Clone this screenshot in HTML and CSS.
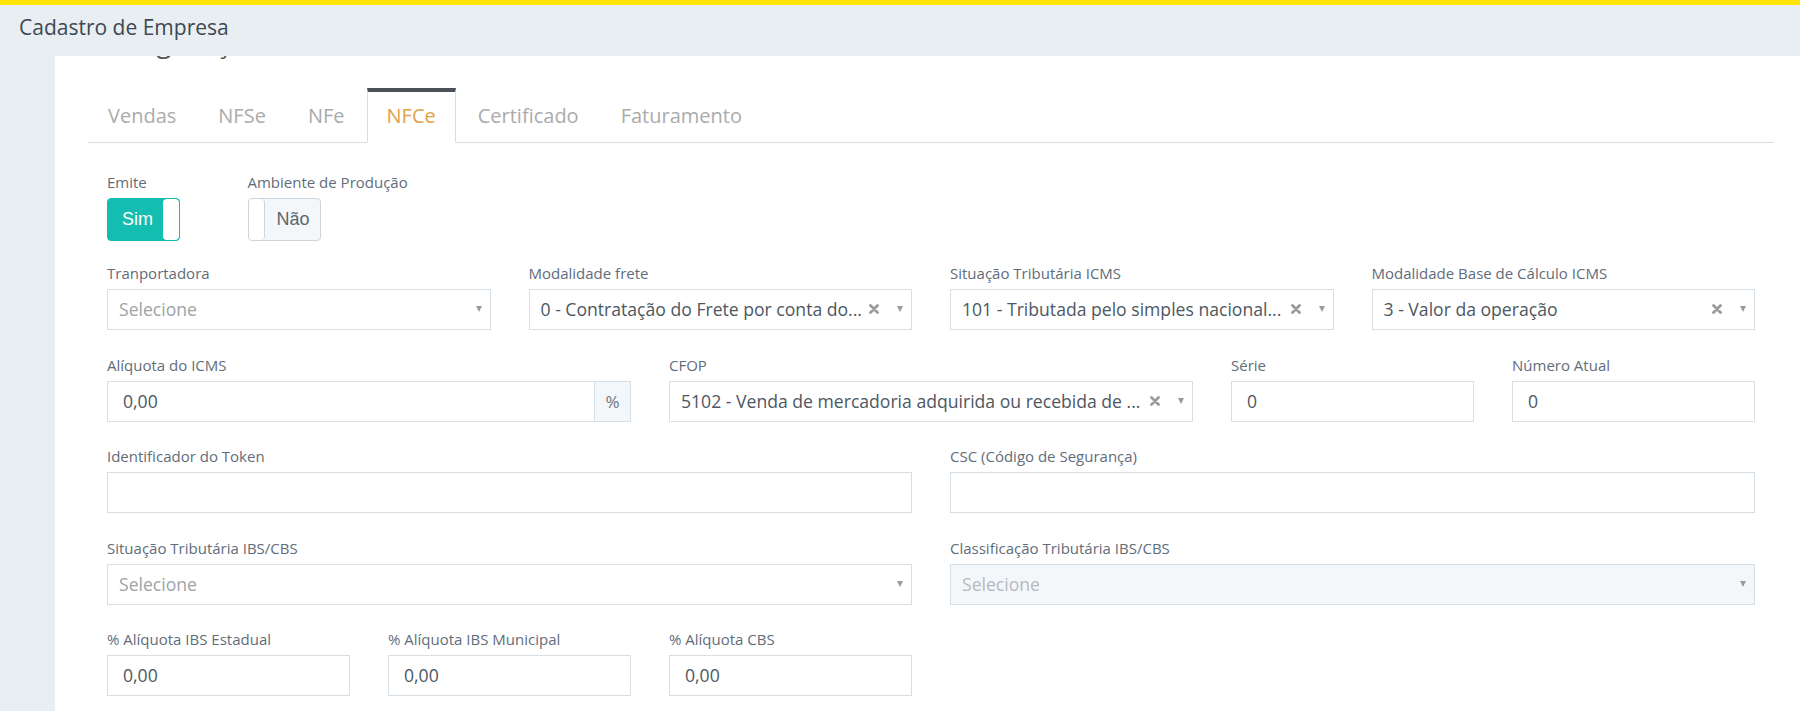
FILE: index.html
```html
<!DOCTYPE html>
<html lang="pt-BR">
<head>
<meta charset="utf-8">
<title>Cadastro de Empresa</title>
<link rel="stylesheet" href="styles.css">
</head>
<body>
<header class="topbar">
  <h1 class="topbar-title">Cadastro de Empresa</h1>
</header>
<main class="panel">
  <div class="page-head">Configurações</div>
  <ul class="tabs">
    <li class="tab"><a>Vendas</a></li>
    <li class="tab"><a>NFSe</a></li>
    <li class="tab"><a>NFe</a></li>
    <li class="tab active"><a>NFCe</a></li>
    <li class="tab"><a>Certificado</a></li>
    <li class="tab"><a>Faturamento</a></li>
  </ul>
  <form class="form">
    <div class="row">
      <div class="col c1 group-first">
        <label class="lbl">Emite</label>
        <div class="toggle on"><span class="toggle-text">Sim</span><span class="knob"></span></div>
      </div>
      <div class="col c1 group-first wide-label">
        <label class="lbl">Ambiente de Produção</label>
        <div class="toggle off"><span class="knob"></span><span class="toggle-text">Não</span></div>
      </div>
    </div>

    <div class="row">
      <div class="col c3 group">
        <label class="lbl">Tranportadora</label>
        <div class="select"><span class="value placeholder">Selecione</span><span class="arrow"></span></div>
      </div>
      <div class="col c3 group">
        <label class="lbl">Modalidade frete</label>
        <div class="select"><span class="value">0 - Contratação do Frete por conta do...</span><span class="clear"><svg viewBox="0 0 10 10" width="10" height="10"><path d="M1.5 1.5 L8.5 8.5 M8.5 1.5 L1.5 8.5"/></svg></span><span class="arrow"></span></div>
      </div>
      <div class="col c3 group">
        <label class="lbl">Situação Tributária ICMS</label>
        <div class="select"><span class="value">101 - Tributada pelo simples nacional...</span><span class="clear"><svg viewBox="0 0 10 10" width="10" height="10"><path d="M1.5 1.5 L8.5 8.5 M8.5 1.5 L1.5 8.5"/></svg></span><span class="arrow"></span></div>
      </div>
      <div class="col c3 group">
        <label class="lbl">Modalidade Base de Cálculo ICMS</label>
        <div class="select"><span class="value">3 - Valor da operação</span><span class="clear"><svg viewBox="0 0 10 10" width="10" height="10"><path d="M1.5 1.5 L8.5 8.5 M8.5 1.5 L1.5 8.5"/></svg></span><span class="arrow"></span></div>
      </div>
    </div>

    <div class="row">
      <div class="col c4 group">
        <label class="lbl">Alíquota do ICMS</label>
        <div class="input-group"><span class="input-value">0,00</span><span class="addon">%</span></div>
      </div>
      <div class="col c4 group">
        <label class="lbl">CFOP</label>
        <div class="select"><span class="value">5102 - Venda de mercadoria adquirida ou recebida de ...</span><span class="clear"><svg viewBox="0 0 10 10" width="10" height="10"><path d="M1.5 1.5 L8.5 8.5 M8.5 1.5 L1.5 8.5"/></svg></span><span class="arrow"></span></div>
      </div>
      <div class="col c2 group">
        <label class="lbl">Série</label>
        <div class="input"><span class="input-value">0</span></div>
      </div>
      <div class="col c2 group">
        <label class="lbl">Número Atual</label>
        <div class="input"><span class="input-value">0</span></div>
      </div>
    </div>

    <div class="row">
      <div class="col c6 group">
        <label class="lbl">Identificador do Token</label>
        <div class="input"></div>
      </div>
      <div class="col c6 group">
        <label class="lbl">CSC (Código de Segurança)</label>
        <div class="input"></div>
      </div>
    </div>

    <div class="row">
      <div class="col c6 group">
        <label class="lbl">Situação Tributária IBS/CBS</label>
        <div class="select"><span class="value placeholder">Selecione</span><span class="arrow"></span></div>
      </div>
      <div class="col c6 group">
        <label class="lbl">Classificação Tributária IBS/CBS</label>
        <div class="select disabled"><span class="value placeholder">Selecione</span><span class="arrow"></span></div>
      </div>
    </div>

    <div class="row">
      <div class="col c2 group">
        <label class="lbl">% Alíquota IBS Estadual</label>
        <div class="input"><span class="input-value">0,00</span></div>
      </div>
      <div class="col c2 group">
        <label class="lbl">% Alíquota IBS Municipal</label>
        <div class="input"><span class="input-value">0,00</span></div>
      </div>
      <div class="col c2 group">
        <label class="lbl">% Alíquota CBS</label>
        <div class="input"><span class="input-value">0,00</span></div>
      </div>
    </div>
  </form>
</main>
</body>
</html>
```

FILE: styles.css
```css
* { box-sizing: border-box; }

html, body { margin: 0; padding: 0; }

body {
  background: #e9eef2;
  font-family: "Open Sans", "Liberation Sans", sans-serif;
  color: #555;
}

.topbar {
  position: fixed;
  top: 0;
  left: 0;
  right: 0;
  height: 56px;
  border-top: 5px solid #ffe500;
  background: #e9eef2;
  z-index: 10;
}

.topbar-title {
  margin: 0;
  padding-left: 19px;
  font-size: 21px;
  font-weight: 400;
  line-height: 45px;
  color: #3d4852;
}

.panel {
  margin-left: 55px;
  background: #fff;
  min-height: 100vh;
  padding: 23px 26px 20px 33px;
}

.page-head {
  font-size: 28px;
  line-height: 36px;
  color: #555;
}

.tabs {
  list-style: none;
  margin: 29px 0 0;
  padding: 0;
  display: flex;
  border-bottom: 1px solid #dcdcdc;
}

.tab {
  margin-bottom: -1px;
  margin-right: 2px;
}

.tab a {
  display: block;
  padding: 0 19px 2px;
  line-height: 48px;
  font-size: 20px;
  color: #ababab;
  border: 1px solid transparent;
  border-top: 4px solid transparent;
}

.tab.active a {
  color: #e2a24a;
  background: #fff;
  border-color: #dcdcdc;
  border-top-color: #4b5158;
  border-bottom-color: #fff;
}

.form {
  padding-top: 29px;
}

.row {
  display: grid;
  grid-template-columns: repeat(12, minmax(0, 1fr));
}

.col { padding: 0 19px; min-width: 0; }
.c1 { grid-column: span 1; }
.c2 { grid-column: span 2; }
.c3 { grid-column: span 3; }
.c4 { grid-column: span 4; }
.c6 { grid-column: span 6; }

.wide-label { white-space: nowrap; }

.group { margin-bottom: 24.5px; }
.group-first { margin-bottom: 22px; }

.lbl {
  display: block;
  font-size: 15px;
  line-height: 20px;
  margin-bottom: 6px;
  color: #5f6d7a;
}

.toggle {
  display: flex;
  width: 73px;
  height: 43px;
  margin-top: 2px;
  border-radius: 4px;
  overflow: hidden;
  font-family: "Liberation Sans", Arial, sans-serif;
  font-size: 18px;
}

.toggle-text {
  flex: 1;
  display: flex;
  align-items: center;
  justify-content: center;
}

.knob {
  width: 16px;
  background: #fff;
  border-radius: 4px;
}

.toggle.on {
  background: #13bdb0;
  border: 1px solid #13bdb0;
  color: #fff;
}

.toggle.on .toggle-text { padding-left: 4px; }

.toggle.off {
  background: #f4f7fa;
  border: 1px solid #cdd5dc;
  color: #5a6670;
}

.toggle.off .knob {
  border-right: 1px solid #cdd5dc;
}

.toggle.off .toggle-text { padding-left: 2px; }

.select,
.input,
.input-group {
  display: flex;
  align-items: center;
  height: 41px;
  border: 1px solid #d6dee6;
  background: #fff;
  font-size: 17.6px;
  color: #4d5761;
}

.select {
  padding: 0 8px 1px 11px;
}

.select.disabled {
  background: #f4f7fa;
}

.value {
  flex: 1;
  min-width: 0;
  white-space: nowrap;
  overflow: hidden;
}

.placeholder { color: #9ea3a8; }
.select.disabled .placeholder { color: #b4bac0; }

.clear {
  display: flex;
  width: 10px;
  height: 10px;
  margin-right: 18px;
}

.clear svg {
  stroke: #9a9a9a;
  stroke-width: 2.8;
  stroke-linecap: round;
  fill: none;
}

.arrow {
  width: 0;
  height: 0;
  border-left: 3.5px solid transparent;
  border-right: 3.5px solid transparent;
  border-top: 6px solid #9a9a9a;
}

.input {
  padding: 0 14px 1px 15px;
}

.input-group {
  padding-left: 15px;
}

.input-group .input-value { flex: 1; padding-bottom: 1px; }

.addon {
  align-self: stretch;
  width: 36px;
  display: flex;
  align-items: center;
  justify-content: center;
  background: #f4f7fa;
  border-left: 1px solid #d6dee6;
  font-size: 17px;
  color: #6b7580;
}
```
